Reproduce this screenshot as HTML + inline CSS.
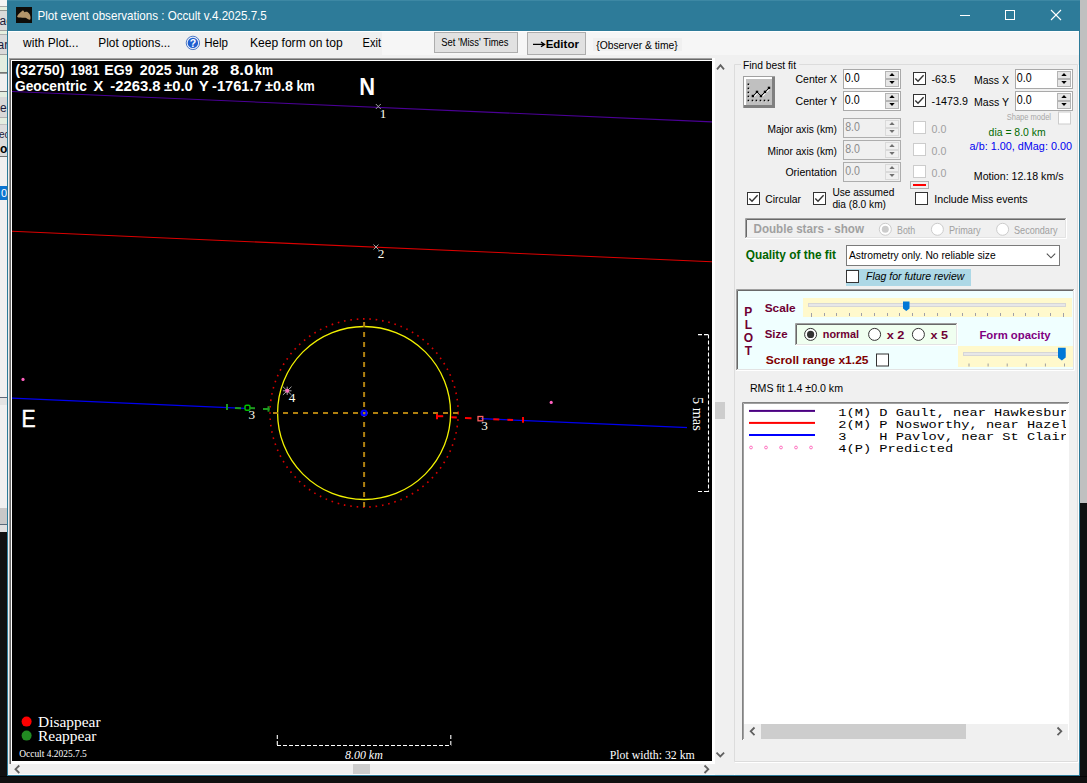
<!DOCTYPE html>
<html><head><meta charset="utf-8">
<style>
html,body{margin:0;padding:0;}
body{width:1087px;height:783px;overflow:hidden;background:#101010;}
svg{display:block;font-family:"Liberation Sans",sans-serif;}
</style></head><body>
<svg width="1087" height="783" viewBox="0 0 1087 783">
<rect x="0" y="0" width="7" height="6" fill="#f4f4f4"/>
<rect x="0" y="6" width="7" height="1" fill="#a8a8a8"/>
<rect x="0" y="7" width="7" height="3.5" fill="#e6efe0"/>
<rect x="0" y="10.5" width="7" height="0.5" fill="#b0b0b0"/>
<rect x="0" y="11" width="7" height="19" fill="#dadada"/>
<rect x="0" y="30" width="7" height="1" fill="#a0a0a0"/>
<rect x="0" y="31" width="7" height="3" fill="#e6efe0"/>
<rect x="0" y="34" width="7" height="1" fill="#b0b0b0"/>
<rect x="0" y="35" width="7" height="19" fill="#dadada"/>
<rect x="0" y="54" width="7" height="1" fill="#a0a0a0"/>
<rect x="0" y="55" width="7" height="17.5" fill="#e3ede0"/>
<rect x="0" y="72.5" width="7" height="1.0" fill="#707070"/>
<rect x="0" y="73.5" width="7" height="17.5" fill="#f0f0f0"/>
<rect x="0" y="91" width="7" height="1" fill="#707070"/>
<rect x="0" y="92" width="7" height="5" fill="#e3ede0"/>
<rect x="0" y="97" width="7" height="20" fill="#d8d8d8"/>
<rect x="0" y="117" width="7" height="1" fill="#b0b0b0"/>
<rect x="0" y="118" width="7" height="6" fill="#e3ede0"/>
<rect x="0" y="124" width="7" height="1" fill="#c0c0c0"/>
<rect x="0" y="125" width="7" height="31" fill="#dcdcdc"/>
<rect x="0" y="156" width="7" height="1" fill="#707070"/>
<rect x="0" y="157" width="7" height="29" fill="#f0f0f0"/>
<rect x="0" y="186" width="7" height="14" fill="#0a74d0"/>
<rect x="0" y="200" width="7" height="197" fill="#f0f0f0"/>
<rect x="0" y="397" width="7" height="1" fill="#606878"/>
<rect x="0" y="398" width="7" height="7" fill="#e4e4e4"/>
<rect x="0" y="405" width="7" height="103" fill="#f0f0f0"/>
<rect x="0" y="508" width="7" height="16" fill="#c8c8c8"/>
<rect x="0" y="524" width="7" height="1" fill="#5a6a7a"/>
<rect x="0" y="525" width="7" height="7" fill="#e0e0e0"/>
<text x="-0.5" y="24.5" font-size="12" fill="#1a1a3a">ac</text>
<text x="-2.5" y="49" font-size="12" fill="#1a1a3a">ar</text>
<text x="0" y="111.5" font-size="12" fill="#1a1a3a">e</text>
<text x="-1" y="137.6" font-size="10" fill="#1a1a3a">ec</text>
<text x="0" y="152.7" font-size="12" fill="#000" font-weight="bold">o</text>
<text x="1" y="196.9" font-size="11" fill="#fff">0</text>
<rect x="1080" y="0" width="7" height="503" fill="#c0c0c0"/>
<rect x="0" y="776" width="1087" height="1" fill="#050505"/>
<rect x="7" y="0" width="1073" height="776" fill="#2d7b99"/>
<rect x="7" y="0" width="1073" height="1" fill="#3d88a4"/>
<rect x="8" y="31" width="1071" height="744" fill="#f0f0f0"/>
<rect x="16" y="7" width="16" height="16" fill="#0e0c08"/>
<path d="M17.1,16.4 C18,14 20.5,12.5 23,10.2 L24.6,12.2 C25.8,11.8 27,11.6 27.8,12.2 C29.5,13.5 30.6,15.5 30.5,17.3 C30.6,18.6 30.4,19.8 29.9,19.8 C28.5,19.5 27,18.5 25.5,17.8 C23.5,17.6 21,17.7 19.3,17.5 C18.2,17.4 17.3,17.2 17.1,16.4 Z" fill="#b3956a"/>
<text x="37.4" y="19.7" font-size="12.6" fill="#fff" textLength="229.4" lengthAdjust="spacingAndGlyphs">Plot event observations : Occult v.4.2025.7.5</text>
<line x1="960" y1="15.5" x2="970" y2="15.5" stroke="#fff" stroke-width="1"/>
<rect x="1005.5" y="10.5" width="9" height="9" fill="none" stroke="#fff" stroke-width="1"/>
<line x1="1051" y1="10" x2="1061" y2="20" stroke="#fff" stroke-width="1.1"/>
<line x1="1061" y1="10" x2="1051" y2="20" stroke="#fff" stroke-width="1.1"/>
<rect x="8" y="31" width="1071" height="1" fill="#ffffff"/>
<rect x="8" y="32" width="374" height="23" fill="#f0f0f0"/>
<rect x="382" y="32" width="697" height="23" fill="#f6f6f6"/>
<text x="23.1" y="46.7" font-size="12.2" fill="#000" textLength="55.4" lengthAdjust="spacingAndGlyphs">with Plot...</text>
<text x="98.3" y="46.7" font-size="12.2" fill="#000" textLength="72" lengthAdjust="spacingAndGlyphs">Plot options...</text>
<circle cx="192.9" cy="42.9" r="6.7" fill="#e6edf8" stroke="#3d6cc0" stroke-width="0.9"/>
<circle cx="192.9" cy="42.9" r="5.2" fill="#1e5ed0"/>
<text x="192.9" y="46.6" font-size="10.5" fill="#fff" font-weight="bold" text-anchor="middle">?</text>
<text x="204.2" y="46.7" font-size="12.2" fill="#000" textLength="23.8" lengthAdjust="spacingAndGlyphs">Help</text>
<text x="250" y="46.7" font-size="12.2" fill="#000" textLength="92.6" lengthAdjust="spacingAndGlyphs">Keep form on top</text>
<text x="362.5" y="46.7" font-size="12.2" fill="#000" textLength="18.5" lengthAdjust="spacingAndGlyphs">Exit</text>
<rect x="434.5" y="32.5" width="83" height="20" fill="#e1e1e1" stroke="#adadad" stroke-width="1"/>
<text x="441.2" y="46" font-size="10" fill="#000" textLength="67.3" lengthAdjust="spacingAndGlyphs">Set 'Miss' Times</text>
<rect x="527.5" y="32.5" width="58" height="22" fill="#e1e1e1" stroke="#adadad" stroke-width="1"/>
<path d="M533,44.4 L543.5,44.4 M541,42 L544.6,44.4 L541,46.8" fill="none" stroke="#000" stroke-width="1.3"/>
<text x="545.7" y="47.7" font-size="11.8" fill="#000" font-weight="bold" textLength="33.2" lengthAdjust="spacingAndGlyphs">Editor</text>
<rect x="593" y="38" width="89" height="13" fill="#f0f0f0"/>
<text x="596.2" y="48.6" font-size="11" fill="#000" textLength="81.5" lengthAdjust="spacingAndGlyphs">{Observer &amp; time}</text>
<rect x="9" y="58" width="703" height="1" fill="#a0a0a0"/>
<rect x="9" y="58" width="1" height="706" fill="#a0a0a0"/>
<rect x="10" y="59" width="702" height="1" fill="#696969"/>
<rect x="10" y="59" width="1" height="705" fill="#696969"/>
<rect x="11" y="60" width="701" height="704" fill="#ffffff"/>
<rect x="712" y="58" width="3" height="706" fill="#ffffff"/>
<rect x="12" y="61" width="700" height="700" fill="#000000"/>
<rect x="715" y="60" width="19" height="703" fill="#f0f0f0"/>
<path d="M717,69.3 L720.5,65.2 L724,69.3" fill="none" stroke="#606060" stroke-width="1.8"/>
<path d="M716.5,752.7 L720.3,756.5 L724.1,752.7" fill="none" stroke="#606060" stroke-width="1.8"/>
<rect x="715" y="402" width="10" height="17" fill="#cdcdcd"/>
<rect x="8" y="764" width="707" height="10" fill="#f0f0f0"/>
<rect x="8" y="774" width="727" height="1" fill="#fbfbfb"/>
<rect x="715" y="763" width="19" height="12" fill="#f0f0f0"/>
<path d="M19.3,765.5 L15.5,769.2 L19.3,773" fill="none" stroke="#606060" stroke-width="1.8"/>
<path d="M704.5,765.5 L708.3,769.2 L704.5,773" fill="none" stroke="#606060" stroke-width="1.8"/>
<rect x="353" y="764" width="17" height="10" fill="#cdcdcd"/>
<g>
<clipPath id="pc"><rect x="12" y="61" width="700" height="700"/></clipPath>
<g clip-path="url(#pc)">
<line x1="11" y1="91.4" x2="712" y2="121.8935" stroke="#4b0096" stroke-width="1.1"/>
<line x1="11" y1="231.3" x2="712" y2="261.7935" stroke="#dc0000" stroke-width="1.05"/>
<line x1="11" y1="398.2" x2="245" y2="408.37899999999996" stroke="#0000f0" stroke-width="1.25"/>
<line x1="481" y1="418.645" x2="712" y2="428.6935" stroke="#0000f0" stroke-width="1.25"/>
<circle cx="364.1" cy="413.0" r="94.1" fill="none" stroke="#d80000" stroke-width="1.6" stroke-dasharray="1.6 4.8"/>
<circle cx="364.1" cy="413.0" r="86.5" fill="none" stroke="#f2f200" stroke-width="1.3"/>
<line x1="273" y1="413.0" x2="459" y2="413.0" stroke="#b08010" stroke-width="2" stroke-dasharray="5 5"/>
<line x1="364.1" y1="322" x2="364.1" y2="508" stroke="#b08010" stroke-width="2" stroke-dasharray="5 5"/>
<circle cx="364.1" cy="413.0" r="2.5" fill="none" stroke="#0000ff" stroke-width="2.2"/>
<line x1="375.8" y1="104.0" x2="380.8" y2="109.0" stroke="#a0a0a0" stroke-width="1"/>
<line x1="380.8" y1="104.0" x2="375.8" y2="109.0" stroke="#a0a0a0" stroke-width="1"/>
<line x1="373.5" y1="244.5" x2="378.5" y2="249.5" stroke="#a0a0a0" stroke-width="1"/>
<line x1="378.5" y1="244.5" x2="373.5" y2="249.5" stroke="#a0a0a0" stroke-width="1"/>
<text x="383" y="117.8" font-size="13.2" fill="#fffff0" font-family="Liberation Serif" text-anchor="middle">1</text>
<text x="381" y="258" font-size="13.2" fill="#fffff0" font-family="Liberation Serif" text-anchor="middle">2</text>
<line x1="282.9" y1="390.8" x2="291.5" y2="390.8" stroke="#a8a8a8" stroke-width="1"/>
<line x1="287.2" y1="386.7" x2="287.2" y2="394.90000000000003" stroke="#a8a8a8" stroke-width="1"/>
<line x1="282.9" y1="386.7" x2="291.5" y2="394.90000000000003" stroke="#a8a8a8" stroke-width="1"/>
<line x1="282.9" y1="394.90000000000003" x2="291.5" y2="386.7" stroke="#a8a8a8" stroke-width="1"/>
<circle cx="287.2" cy="390.8" r="2" fill="#ff70c0"/>
<text x="292" y="402" font-size="13.2" fill="#fffff0" font-family="Liberation Serif" text-anchor="middle">4</text>
<circle cx="23" cy="379.4" r="1.6" fill="#ff60c0"/>
<circle cx="551.2" cy="402.4" r="1.6" fill="#ff60c0"/>
<line x1="227" y1="404" x2="227" y2="410" stroke="#1e9a1e" stroke-width="2"/>
<line x1="235" y1="407.94399999999996" x2="241" y2="408.205" stroke="#1e9a1e" stroke-width="2"/>
<rect x="245" y="405.3" width="5" height="5" rx="1.5" fill="none" stroke="#00c000" stroke-width="1.5"/>
<line x1="249.5" y1="408" x2="255" y2="408.2" stroke="#1e9a1e" stroke-width="2"/>
<line x1="263" y1="409" x2="269.5" y2="409" stroke="#1e9a1e" stroke-width="2"/>
<line x1="268.5" y1="406.2" x2="268.5" y2="411.7" stroke="#1e9a1e" stroke-width="2"/>
<text x="251.8" y="419" font-size="13.2" fill="#fffff0" font-family="Liberation Serif" text-anchor="middle">3</text>
<line x1="437" y1="413.7" x2="437" y2="419.3" stroke="#ff0000" stroke-width="2"/>
<line x1="437" y1="416.2" x2="443.2" y2="416.2" stroke="#ff0000" stroke-width="2"/>
<line x1="451.3" y1="417.2" x2="456.8" y2="417.4" stroke="#ff0000" stroke-width="2"/>
<line x1="465" y1="418" x2="471.5" y2="418.2" stroke="#ff0000" stroke-width="2"/>
<rect x="478" y="416.5" width="4.8" height="4.3" fill="none" stroke="#ff6060" stroke-width="1.3"/>
<line x1="493.3" y1="419.18005" x2="499.3" y2="419.44104999999996" stroke="#ff0000" stroke-width="2"/>
<line x1="507.4" y1="419.79339999999996" x2="513" y2="420.037" stroke="#ff0000" stroke-width="2"/>
<line x1="523" y1="417" x2="523" y2="422.8" stroke="#ff0000" stroke-width="2"/>
<text x="484.6" y="430" font-size="13.2" fill="#fffff0" font-family="Liberation Serif" text-anchor="middle">3</text>
<text x="15.2" y="74.6" font-size="13.8" fill="#fff" font-weight="bold" textLength="49.4" lengthAdjust="spacingAndGlyphs">(32750)</text>
<text x="70.5" y="74.6" font-size="13.8" fill="#fff" font-weight="bold" textLength="28.9" lengthAdjust="spacingAndGlyphs">1981</text>
<text x="104.3" y="74.6" font-size="13.8" fill="#fff" font-weight="bold" textLength="28.2" lengthAdjust="spacingAndGlyphs">EG9</text>
<text x="139.8" y="74.6" font-size="13.8" fill="#fff" font-weight="bold" textLength="31.8" lengthAdjust="spacingAndGlyphs">2025</text>
<text x="175.6" y="74.6" font-size="13.8" fill="#fff" font-weight="bold" textLength="22.4" lengthAdjust="spacingAndGlyphs">Jun</text>
<text x="202" y="74.6" font-size="13.8" fill="#fff" font-weight="bold" textLength="16.6" lengthAdjust="spacingAndGlyphs">28</text>
<text x="230" y="74.6" font-size="13.8" fill="#fff" font-weight="bold" textLength="23.4" lengthAdjust="spacingAndGlyphs">8.0</text>
<text x="255" y="74.6" font-size="13.8" fill="#fff" font-weight="bold" textLength="18" lengthAdjust="spacingAndGlyphs">km</text>
<text x="15" y="90.6" font-size="13.8" fill="#fff" font-weight="bold" textLength="71.8" lengthAdjust="spacingAndGlyphs">Geocentric</text>
<text x="93.4" y="90.6" font-size="13.8" fill="#fff" font-weight="bold" textLength="9.9" lengthAdjust="spacingAndGlyphs">X</text>
<text x="110.3" y="90.6" font-size="13.8" fill="#fff" font-weight="bold" textLength="50.3" lengthAdjust="spacingAndGlyphs">-2263.8</text>
<text x="164" y="90.6" font-size="13.8" fill="#fff" font-weight="bold" textLength="28.8" lengthAdjust="spacingAndGlyphs">±0.0</text>
<text x="198.7" y="90.6" font-size="13.8" fill="#fff" font-weight="bold" textLength="10.0" lengthAdjust="spacingAndGlyphs">Y</text>
<text x="212" y="90.6" font-size="13.8" fill="#fff" font-weight="bold" textLength="49.7" lengthAdjust="spacingAndGlyphs">-1761.7</text>
<text x="265" y="90.6" font-size="13.8" fill="#fff" font-weight="bold" textLength="28" lengthAdjust="spacingAndGlyphs">±0.8</text>
<text x="296.5" y="90.6" font-size="13.8" fill="#fff" font-weight="bold" textLength="18.2" lengthAdjust="spacingAndGlyphs">km</text>
<text x="359.3" y="95" font-size="23.5" fill="#fff" font-weight="bold" textLength="15.8" lengthAdjust="spacingAndGlyphs">N</text>
<text x="21.6" y="426.6" font-size="23" fill="#fff" textLength="14.1" lengthAdjust="spacingAndGlyphs" stroke="#fff" stroke-width="0.5">E</text>
<rect x="687" y="393" width="25" height="42" fill="#000"/>
<path d="M698,334.6 L709,334.6 M708.5,334.6 L708.5,492 M698,491.5 L709,491.5" fill="none" stroke="#fff" stroke-width="1.1" stroke-dasharray="4 2"/>
<text x="0" y="0" font-family="Liberation Serif" font-size="15" fill="#fff" transform="translate(693.2,397) rotate(90)" textLength="33.8" lengthAdjust="spacingAndGlyphs">5 mas</text>
<path d="M277.3,735 L277.3,746 M277,745.5 L451.3,745.5 M450.8,735 L450.8,746" fill="none" stroke="#fff" stroke-width="1.1" stroke-dasharray="4 2"/>
<text x="345" y="759" font-size="13" fill="#fff" font-family="Liberation Serif" font-style="italic" textLength="37.8" lengthAdjust="spacingAndGlyphs">8.00 km</text>
<text x="609.7" y="758.9" font-size="13" fill="#fff" font-family="Liberation Serif" textLength="85.1" lengthAdjust="spacingAndGlyphs">Plot width: 32 km</text>
<circle cx="26.6" cy="721.6" r="5" fill="#ff0000"/>
<circle cx="26.6" cy="735.6" r="5" fill="#228b22"/>
<text x="38" y="726.9" font-size="15" fill="#fff" font-family="Liberation Serif" textLength="62.6" lengthAdjust="spacingAndGlyphs">Disappear</text>
<text x="38" y="740.7" font-size="15" fill="#fff" font-family="Liberation Serif" textLength="58.5" lengthAdjust="spacingAndGlyphs">Reappear</text>
<text x="19.2" y="756.7" font-size="11" fill="#fff" font-family="Liberation Serif" textLength="67.6" lengthAdjust="spacingAndGlyphs">Occult 4.2025.7.5</text>
</g></g>
<path d="M741,64.5 L734.5,64.5 L734.5,761.5 L1077.5,761.5 L1077.5,64.5 L799,64.5" fill="none" stroke="#dcdcdc" stroke-width="1"/>
<path d="M735,762.5 L1078.5,762.5 L1078.5,65" fill="none" stroke="#ffffff" stroke-width="1"/>
<text x="743" y="68.8" font-size="11.8" fill="#000" textLength="53" lengthAdjust="spacingAndGlyphs">Find best fit</text>
<rect x="743" y="76" width="32" height="32" fill="#808080"/>
<rect x="743" y="76" width="32" height="1" fill="#a0a0a0"/>
<rect x="743" y="76" width="1" height="32" fill="#a0a0a0"/>
<rect x="744" y="77" width="28" height="2" fill="#ffffff"/>
<rect x="744" y="77" width="2" height="28" fill="#ffffff"/>
<rect x="746" y="79" width="26" height="26" fill="#c0c0c0"/>
<rect x="748.1" y="84.0" width="1.6" height="1.6" fill="#ffffff"/>
<rect x="747.6" y="83.5" width="1.6" height="1.6" fill="#000"/>
<rect x="748.1" y="88.1" width="1.6" height="1.6" fill="#ffffff"/>
<rect x="747.6" y="87.6" width="1.6" height="1.6" fill="#000"/>
<rect x="748.1" y="92.1" width="1.6" height="1.6" fill="#ffffff"/>
<rect x="747.6" y="91.6" width="1.6" height="1.6" fill="#000"/>
<rect x="748.1" y="96.1" width="1.6" height="1.6" fill="#ffffff"/>
<rect x="747.6" y="95.6" width="1.6" height="1.6" fill="#000"/>
<rect x="748.1" y="100.19999999999999" width="1.6" height="1.6" fill="#ffffff"/>
<rect x="747.6" y="99.69999999999999" width="1.6" height="1.6" fill="#000"/>
<rect x="752.2" y="100.19999999999999" width="1.6" height="1.6" fill="#ffffff"/>
<rect x="751.7" y="99.69999999999999" width="1.6" height="1.6" fill="#000"/>
<rect x="756.1" y="100.19999999999999" width="1.6" height="1.6" fill="#ffffff"/>
<rect x="755.6" y="99.69999999999999" width="1.6" height="1.6" fill="#000"/>
<rect x="760.2" y="100.19999999999999" width="1.6" height="1.6" fill="#ffffff"/>
<rect x="759.7" y="99.69999999999999" width="1.6" height="1.6" fill="#000"/>
<rect x="764.2" y="100.19999999999999" width="1.6" height="1.6" fill="#ffffff"/>
<rect x="763.7" y="99.69999999999999" width="1.6" height="1.6" fill="#000"/>
<rect x="768.2" y="100.19999999999999" width="1.6" height="1.6" fill="#ffffff"/>
<rect x="767.7" y="99.69999999999999" width="1.6" height="1.6" fill="#000"/>
<polyline points="753.9,97 757.9,92.9 761.9,97 765.9,92.9 769.9,88.9" fill="none" stroke="#fff" stroke-width="1"/>
<polyline points="752.9,96 757,91.9 761,96 765,91.9 769,87.9" fill="none" stroke="#000" stroke-width="1"/>
<rect x="751.6999999999999" y="94.8" width="2.4" height="2.4" fill="#000"/>
<rect x="755.8" y="90.7" width="2.4" height="2.4" fill="#000"/>
<rect x="759.8" y="94.8" width="2.4" height="2.4" fill="#000"/>
<rect x="763.8" y="90.7" width="2.4" height="2.4" fill="#000"/>
<rect x="767.8" y="86.7" width="2.4" height="2.4" fill="#000"/>
<rect x="843.5" y="69.5" width="57" height="19" fill="#ffffff" stroke="#a9a9a9" stroke-width="1"/>
<rect x="885.5" y="71.5" width="13" height="15" fill="#e6e6e6" stroke="#b4b4b4" stroke-width="1"/>
<rect x="886" y="78.0" width="12" height="2" fill="#b4b4b4"/>
<path d="M889.3,75.9 L892,72.9 L894.7,75.9 Z" fill="#000"/>
<path d="M889.3,81.1 L892,84.1 L894.7,81.1 Z" fill="#000"/>
<rect x="843.5" y="91.5" width="57" height="19" fill="#ffffff" stroke="#a9a9a9" stroke-width="1"/>
<rect x="885.5" y="93.5" width="13" height="15" fill="#e6e6e6" stroke="#b4b4b4" stroke-width="1"/>
<rect x="886" y="100.0" width="12" height="2" fill="#b4b4b4"/>
<path d="M889.3,97.9 L892,94.9 L894.7,97.9 Z" fill="#000"/>
<path d="M889.3,103.1 L892,106.1 L894.7,103.1 Z" fill="#000"/>
<rect x="1015.5" y="69.5" width="57" height="19" fill="#ffffff" stroke="#a9a9a9" stroke-width="1"/>
<rect x="1057.5" y="71.5" width="13" height="15" fill="#e6e6e6" stroke="#b4b4b4" stroke-width="1"/>
<rect x="1058" y="78.0" width="12" height="2" fill="#b4b4b4"/>
<path d="M1061.3,75.9 L1064,72.9 L1066.7,75.9 Z" fill="#000"/>
<path d="M1061.3,81.1 L1064,84.1 L1066.7,81.1 Z" fill="#000"/>
<rect x="1015.5" y="91.5" width="57" height="19" fill="#ffffff" stroke="#a9a9a9" stroke-width="1"/>
<rect x="1057.5" y="93.5" width="13" height="15" fill="#e6e6e6" stroke="#b4b4b4" stroke-width="1"/>
<rect x="1058" y="100.0" width="12" height="2" fill="#b4b4b4"/>
<path d="M1061.3,97.9 L1064,94.9 L1066.7,97.9 Z" fill="#000"/>
<path d="M1061.3,103.1 L1064,106.1 L1066.7,103.1 Z" fill="#000"/>
<rect x="843.5" y="118.5" width="57" height="19" fill="#f0f0f0" stroke="#adadad" stroke-width="1"/>
<rect x="885.5" y="120.5" width="13" height="15" fill="#f0f0f0" stroke="#dadada" stroke-width="1"/>
<rect x="886" y="127.0" width="12" height="2" fill="#dadada"/>
<path d="M889.3,124.9 L892,121.9 L894.7,124.9 Z" fill="#707070"/>
<path d="M889.3,130.1 L892,133.1 L894.7,130.1 Z" fill="#707070"/>
<rect x="843.5" y="140.5" width="57" height="19" fill="#f0f0f0" stroke="#adadad" stroke-width="1"/>
<rect x="885.5" y="142.5" width="13" height="15" fill="#f0f0f0" stroke="#dadada" stroke-width="1"/>
<rect x="886" y="149.0" width="12" height="2" fill="#dadada"/>
<path d="M889.3,146.9 L892,143.9 L894.7,146.9 Z" fill="#707070"/>
<path d="M889.3,152.1 L892,155.1 L894.7,152.1 Z" fill="#707070"/>
<rect x="843.5" y="162.5" width="57" height="19" fill="#f0f0f0" stroke="#adadad" stroke-width="1"/>
<rect x="885.5" y="164.5" width="13" height="15" fill="#f0f0f0" stroke="#dadada" stroke-width="1"/>
<rect x="886" y="171.0" width="12" height="2" fill="#dadada"/>
<path d="M889.3,168.9 L892,165.9 L894.7,168.9 Z" fill="#707070"/>
<path d="M889.3,174.1 L892,177.1 L894.7,174.1 Z" fill="#707070"/>
<text x="795.5" y="83" font-size="11.8" fill="#000" textLength="41.5" lengthAdjust="spacingAndGlyphs">Center X</text>
<text x="795.5" y="105" font-size="11.8" fill="#000" textLength="41.5" lengthAdjust="spacingAndGlyphs">Center Y</text>
<text x="844.8" y="82" font-size="12.2" fill="#000" textLength="14.8" lengthAdjust="spacingAndGlyphs">0.0</text>
<text x="844.8" y="104" font-size="12.2" fill="#000" textLength="14.8" lengthAdjust="spacingAndGlyphs">0.0</text>
<text x="1016.8" y="82" font-size="12.2" fill="#000" textLength="14.8" lengthAdjust="spacingAndGlyphs">0.0</text>
<text x="1016.8" y="104" font-size="12.2" fill="#000" textLength="14.8" lengthAdjust="spacingAndGlyphs">0.0</text>
<rect x="913.5" y="72.5" width="12" height="12" fill="#ffffff" stroke="#333333" stroke-width="1"/>
<path d="M915.3,78.5 L918,81.2 L923.6,75.3" fill="none" stroke="#333" stroke-width="1.4"/>
<rect x="913.5" y="94.5" width="12" height="12" fill="#ffffff" stroke="#333333" stroke-width="1"/>
<path d="M915.3,100.5 L918,103.2 L923.6,97.3" fill="none" stroke="#333" stroke-width="1.4"/>
<text x="931.6" y="83" font-size="11.8" fill="#000" textLength="24" lengthAdjust="spacingAndGlyphs">-63.5</text>
<text x="931.6" y="104.6" font-size="11.8" fill="#000" textLength="36.3" lengthAdjust="spacingAndGlyphs">-1473.9</text>
<text x="974" y="84" font-size="11.8" fill="#000" textLength="35" lengthAdjust="spacingAndGlyphs">Mass X</text>
<text x="974" y="106" font-size="11.8" fill="#000" textLength="35" lengthAdjust="spacingAndGlyphs">Mass Y</text>
<text x="1006.7" y="119.5" font-size="9" fill="#a8a8a8" textLength="44.3" lengthAdjust="spacingAndGlyphs">Shape model</text>
<rect x="1058.5" y="112.0" width="12" height="12" fill="#ffffff" stroke="#cccccc" stroke-width="1"/>
<text x="767.4" y="132.9" font-size="11.8" fill="#000" textLength="69.6" lengthAdjust="spacingAndGlyphs">Major axis (km)</text>
<text x="767.4" y="154.5" font-size="11.8" fill="#000" textLength="69.6" lengthAdjust="spacingAndGlyphs">Minor axis (km)</text>
<text x="785.4" y="175.8" font-size="11.8" fill="#000" textLength="51.6" lengthAdjust="spacingAndGlyphs">Orientation</text>
<text x="845.2" y="130.8" font-size="12.2" fill="#8c8c8c" textLength="14.8" lengthAdjust="spacingAndGlyphs">8.0</text>
<text x="845.2" y="152.8" font-size="12.2" fill="#8c8c8c" textLength="14.8" lengthAdjust="spacingAndGlyphs">8.0</text>
<text x="845.2" y="174.8" font-size="12.2" fill="#8c8c8c" textLength="14.8" lengthAdjust="spacingAndGlyphs">0.0</text>
<rect x="913.5" y="121.5" width="12" height="12" fill="#ffffff" stroke="#cccccc" stroke-width="1"/>
<rect x="913.5" y="143.5" width="12" height="12" fill="#ffffff" stroke="#cccccc" stroke-width="1"/>
<rect x="913.5" y="165.5" width="12" height="12" fill="#ffffff" stroke="#cccccc" stroke-width="1"/>
<text x="931.6" y="133" font-size="11.8" fill="#a0a0a0" textLength="14.8" lengthAdjust="spacingAndGlyphs">0.0</text>
<text x="931.6" y="155" font-size="11.8" fill="#a0a0a0" textLength="14.8" lengthAdjust="spacingAndGlyphs">0.0</text>
<text x="931.6" y="177" font-size="11.8" fill="#a0a0a0" textLength="14.8" lengthAdjust="spacingAndGlyphs">0.0</text>
<text x="988.6" y="135.8" font-size="11.8" fill="#006a00" textLength="57" lengthAdjust="spacingAndGlyphs">dia = 8.0 km</text>
<text x="969.6" y="150" font-size="11.8" fill="#0000f0" textLength="102.4" lengthAdjust="spacingAndGlyphs">a/b: 1.00, dMag: 0.00</text>
<text x="973.8" y="179.5" font-size="11.8" fill="#000" textLength="89.7" lengthAdjust="spacingAndGlyphs">Motion: 12.18 km/s</text>
<rect x="910.5" y="181.5" width="18" height="7" fill="#f0f0f0" stroke="#b0b0b0" stroke-width="1"/>
<rect x="913" y="184" width="13" height="2" fill="#ff0000"/>
<rect x="747.5" y="192.5" width="12" height="12" fill="#ffffff" stroke="#333333" stroke-width="1"/>
<path d="M749.3,198.5 L752,201.2 L757.6,195.3" fill="none" stroke="#333" stroke-width="1.4"/>
<text x="765.3" y="202.7" font-size="11.8" fill="#000" textLength="35.7" lengthAdjust="spacingAndGlyphs">Circular</text>
<rect x="813.5" y="192.5" width="12" height="12" fill="#ffffff" stroke="#333333" stroke-width="1"/>
<path d="M815.3,198.5 L818,201.2 L823.6,195.3" fill="none" stroke="#333" stroke-width="1.4"/>
<text x="832.4" y="195.7" font-size="10.8" fill="#000" textLength="61.9" lengthAdjust="spacingAndGlyphs">Use assumed</text>
<text x="832.4" y="208.1" font-size="10.8" fill="#000" textLength="53.6" lengthAdjust="spacingAndGlyphs">dia (8.0 km)</text>
<rect x="915.5" y="192.5" width="12" height="12" fill="#ffffff" stroke="#333333" stroke-width="1"/>
<text x="934.3" y="202.9" font-size="11.8" fill="#000" textLength="93.3" lengthAdjust="spacingAndGlyphs">Include Miss events</text>
<path d="M745.5,238 L745.5,218.5 L1066,218.5" fill="none" stroke="#a0a0a0" stroke-width="1"/>
<path d="M746.5,237 L746.5,219.5 L1065,219.5" fill="none" stroke="#696969" stroke-width="1"/>
<path d="M745,238.5 L1066.5,238.5 L1066.5,218" fill="none" stroke="#ffffff" stroke-width="1"/>
<path d="M746,237.5 L1065.5,237.5 L1065.5,219" fill="none" stroke="#e3e3e3" stroke-width="1"/>
<text x="753.5" y="232.6" font-size="12" fill="#a0a0a0" font-weight="bold" textLength="110.5" lengthAdjust="spacingAndGlyphs">Double stars - show</text>
<circle cx="885.3" cy="229.3" r="6" fill="#fff" stroke="#cccccc" stroke-width="1"/>
<circle cx="885.3" cy="229.3" r="3.5" fill="#cccccc"/>
<text x="897" y="233.7" font-size="10.8" fill="#a0a0a0" textLength="18.2" lengthAdjust="spacingAndGlyphs">Both</text>
<circle cx="937.4" cy="229.3" r="6" fill="#fff" stroke="#cccccc" stroke-width="1"/>
<text x="949" y="233.7" font-size="10.8" fill="#a0a0a0" textLength="31.6" lengthAdjust="spacingAndGlyphs">Primary</text>
<circle cx="1002.6" cy="229.3" r="6" fill="#fff" stroke="#cccccc" stroke-width="1"/>
<text x="1014" y="233.7" font-size="10.8" fill="#a0a0a0" textLength="43.5" lengthAdjust="spacingAndGlyphs">Secondary</text>
<text x="745.7" y="259" font-size="12" fill="#006400" font-weight="bold" textLength="90.3" lengthAdjust="spacingAndGlyphs">Quality of the fit</text>
<rect x="846.5" y="245.5" width="213" height="20" fill="#ffffff" stroke="#7a7a7a" stroke-width="1"/>
<text x="849" y="259" font-size="11.8" fill="#000" textLength="146.7" lengthAdjust="spacingAndGlyphs">Astrometry only. No reliable size</text>
<path d="M1046.8,253.6 L1051,257.8 L1055.2,253.6" fill="none" stroke="#505050" stroke-width="1.1"/>
<rect x="846" y="269" width="125" height="17" fill="#add8e6"/>
<rect x="846.5" y="270.5" width="12" height="12" fill="#ffffff" stroke="#333333" stroke-width="1"/>
<text x="866" y="280.1" font-size="11.8" fill="#000" font-style="italic" textLength="98.3" lengthAdjust="spacingAndGlyphs">Flag for future review</text>
<rect x="736" y="289" width="339" height="81" fill="#f0ffff"/>
<path d="M736.5,370 L736.5,289.5 L1074,289.5" fill="none" stroke="#a0a0a0" stroke-width="1"/>
<path d="M737.5,369 L737.5,290.5 L1073,290.5" fill="none" stroke="#696969" stroke-width="1"/>
<path d="M736,370.5 L1074.5,370.5 L1074.5,289" fill="none" stroke="#ffffff" stroke-width="1"/>
<path d="M737,369.5 L1073.5,369.5 L1073.5,290" fill="none" stroke="#e3e3e3" stroke-width="1"/>
<text x="748.3" y="315.6" font-size="12" fill="#6e0033" font-weight="bold" text-anchor="middle">P</text>
<text x="748.3" y="329" font-size="12" fill="#6e0033" font-weight="bold" text-anchor="middle">L</text>
<text x="748.3" y="342" font-size="12" fill="#6e0033" font-weight="bold" text-anchor="middle">O</text>
<text x="748.3" y="355" font-size="12" fill="#6e0033" font-weight="bold" text-anchor="middle">T</text>
<text x="764.7" y="311.8" font-size="11.8" fill="#6e0033" font-weight="bold" textLength="31" lengthAdjust="spacingAndGlyphs">Scale</text>
<text x="764.7" y="337.6" font-size="11.8" fill="#6e0033" font-weight="bold" textLength="22.9" lengthAdjust="spacingAndGlyphs">Size</text>
<text x="765.7" y="363.5" font-size="11.8" fill="#800000" font-weight="bold" textLength="102.8" lengthAdjust="spacingAndGlyphs">Scroll range x1.25</text>
<rect x="803" y="298" width="269" height="19" fill="#fff9cc"/>
<rect x="808.5" y="303.5" width="257" height="3" fill="#e7e7e7" stroke="#d6d6d6" stroke-width="1"/>
<rect x="811" y="313" width="1" height="4" fill="#a0a0a8"/>
<rect x="824" y="313" width="1" height="3" fill="#a0a0a8"/>
<rect x="836" y="313" width="1" height="3" fill="#a0a0a8"/>
<rect x="849" y="313" width="1" height="3" fill="#a0a0a8"/>
<rect x="861" y="313" width="1" height="3" fill="#a0a0a8"/>
<rect x="874" y="313" width="1" height="3" fill="#a0a0a8"/>
<rect x="887" y="313" width="1" height="3" fill="#a0a0a8"/>
<rect x="899" y="313" width="1" height="3" fill="#a0a0a8"/>
<rect x="912" y="313" width="1" height="3" fill="#a0a0a8"/>
<rect x="924" y="313" width="1" height="3" fill="#a0a0a8"/>
<rect x="937" y="313" width="1" height="3" fill="#a0a0a8"/>
<rect x="950" y="313" width="1" height="3" fill="#a0a0a8"/>
<rect x="962" y="313" width="1" height="3" fill="#a0a0a8"/>
<rect x="975" y="313" width="1" height="3" fill="#a0a0a8"/>
<rect x="987" y="313" width="1" height="3" fill="#a0a0a8"/>
<rect x="1000" y="313" width="1" height="3" fill="#a0a0a8"/>
<rect x="1013" y="313" width="1" height="3" fill="#a0a0a8"/>
<rect x="1025" y="313" width="1" height="3" fill="#a0a0a8"/>
<rect x="1038" y="313" width="1" height="3" fill="#a0a0a8"/>
<rect x="1050" y="313" width="1" height="3" fill="#a0a0a8"/>
<rect x="1063" y="313" width="1" height="4" fill="#a0a0a8"/>
<path d="M903,301.5 L909.5,301.5 L909.5,308.5 L906.25,311 L903,308.5 Z" fill="#0078d7"/>
<rect x="795" y="323" width="162" height="22" fill="#f0fff0"/>
<path d="M795.5,345 L795.5,323.5 L957,323.5" fill="none" stroke="#a0a0a0" stroke-width="1"/>
<path d="M796.5,344 L796.5,324.5 L956,324.5" fill="none" stroke="#696969" stroke-width="1"/>
<path d="M795,345.5 L957.5,345.5 L957.5,323" fill="none" stroke="#ffffff" stroke-width="1"/>
<path d="M796,344.5 L956.5,344.5 L956.5,324" fill="none" stroke="#e3e3e3" stroke-width="1"/>
<circle cx="810.6" cy="334.4" r="6" fill="#fff" stroke="#333" stroke-width="1"/>
<circle cx="810.6" cy="334.4" r="3.6" fill="#333"/>
<text x="822.8" y="338.3" font-size="11.8" fill="#6e0033" font-weight="bold" textLength="36.2" lengthAdjust="spacingAndGlyphs">normal</text>
<circle cx="874.6" cy="334.4" r="6" fill="#fff" stroke="#333" stroke-width="1"/>
<text x="886.7" y="338.8" font-size="11.8" fill="#6e0033" font-weight="bold" textLength="17.7" lengthAdjust="spacingAndGlyphs">x 2</text>
<circle cx="918.4" cy="334.4" r="6" fill="#fff" stroke="#333" stroke-width="1"/>
<text x="930.5" y="338.8" font-size="11.8" fill="#6e0033" font-weight="bold" textLength="17.5" lengthAdjust="spacingAndGlyphs">x 5</text>
<text x="979.4" y="338.8" font-size="11.8" fill="#800080" font-weight="bold" textLength="71.1" lengthAdjust="spacingAndGlyphs">Form opacity</text>
<rect x="876.5" y="354.0" width="12" height="12" fill="#ffffff" stroke="#333333" stroke-width="1"/>
<rect x="958" y="346" width="115" height="21" fill="#fff9cc"/>
<rect x="963.5" y="352.5" width="102" height="3" fill="#e7e7e7" stroke="#d6d6d6" stroke-width="1"/>
<rect x="968.5" y="363.5" width="1" height="3" fill="#a0a0a0"/>
<rect x="987.6" y="363.5" width="1" height="3" fill="#a0a0a0"/>
<rect x="1006.7" y="363.5" width="1" height="3" fill="#a0a0a0"/>
<rect x="1025.8" y="363.5" width="1" height="3" fill="#a0a0a0"/>
<rect x="1044.9" y="363.5" width="1" height="3" fill="#a0a0a0"/>
<rect x="1064.0" y="363.5" width="1" height="3" fill="#a0a0a0"/>
<path d="M1058,347.7 L1065.7,347.7 L1065.7,357.5 L1061.85,360.5 L1058,357.5 Z" fill="#0078d7"/>
<text x="749.9" y="392.4" font-size="11.8" fill="#000" textLength="93.1" lengthAdjust="spacingAndGlyphs">RMS fit 1.4 ±0.0 km</text>
<rect x="742" y="402" width="327" height="338" fill="#ffffff"/>
<path d="M742.5,740 L742.5,402.5 L1069,402.5" fill="none" stroke="#828282" stroke-width="1"/>
<path d="M743.5,739 L743.5,403.5 L1068,403.5" fill="none" stroke="#a0a0a0" stroke-width="1"/>
<path d="M742,740.5 L1069.5,740.5 L1069.5,402" fill="none" stroke="#f0f0f0" stroke-width="1"/>
<rect x="749" y="409.9" width="66" height="2" fill="#4b0082"/>
<rect x="749" y="421.9" width="66" height="2" fill="#ff0000"/>
<rect x="749" y="434" width="66" height="2" fill="#0000ff"/>
<circle cx="751" cy="447.5" r="1.4" fill="none" stroke="#ff70c0" stroke-width="1"/>
<circle cx="766" cy="447.5" r="1.4" fill="none" stroke="#ff70c0" stroke-width="1"/>
<circle cx="781" cy="447.5" r="1.4" fill="none" stroke="#ff70c0" stroke-width="1"/>
<circle cx="796" cy="447.5" r="1.4" fill="none" stroke="#ff70c0" stroke-width="1"/>
<circle cx="811" cy="447.5" r="1.4" fill="none" stroke="#ff70c0" stroke-width="1"/>
<clipPath id="lc"><rect x="744" y="404" width="322" height="320"/></clipPath>
<g clip-path="url(#lc)">
<text x="838.3" y="415.6" font-family="Liberation Mono" font-size="11" fill="#000" textLength="237.80" lengthAdjust="spacingAndGlyphs" xml:space="preserve" style="white-space:pre">1(M) D Gault, near Hawkesbury</text>
<text x="838.3" y="427.6" font-family="Liberation Mono" font-size="11" fill="#000" textLength="270.60" lengthAdjust="spacingAndGlyphs" xml:space="preserve" style="white-space:pre">2(M) P Nosworthy, near Hazelbrook</text>
<text x="838.3" y="439.6" font-family="Liberation Mono" font-size="11" fill="#000" textLength="229.60" lengthAdjust="spacingAndGlyphs" xml:space="preserve" style="white-space:pre">3    H Pavlov, near St Clair</text>
<text x="838.3" y="451.7" font-family="Liberation Mono" font-size="11" fill="#000" textLength="114.80" lengthAdjust="spacingAndGlyphs" xml:space="preserve" style="white-space:pre">4(P) Predicted</text>
</g>
<rect x="744" y="724" width="324" height="16" fill="#f0f0f0"/>
<rect x="761" y="724" width="205" height="15" fill="#cdcdcd"/>
<path d="M754.5,727.5 L750.7,731.3 L754.5,735.1" fill="none" stroke="#606060" stroke-width="1.8"/>
<path d="M1057.5,727.5 L1061.3,731.3 L1057.5,735.1" fill="none" stroke="#606060" stroke-width="1.8"/>
</svg>
</body></html>
